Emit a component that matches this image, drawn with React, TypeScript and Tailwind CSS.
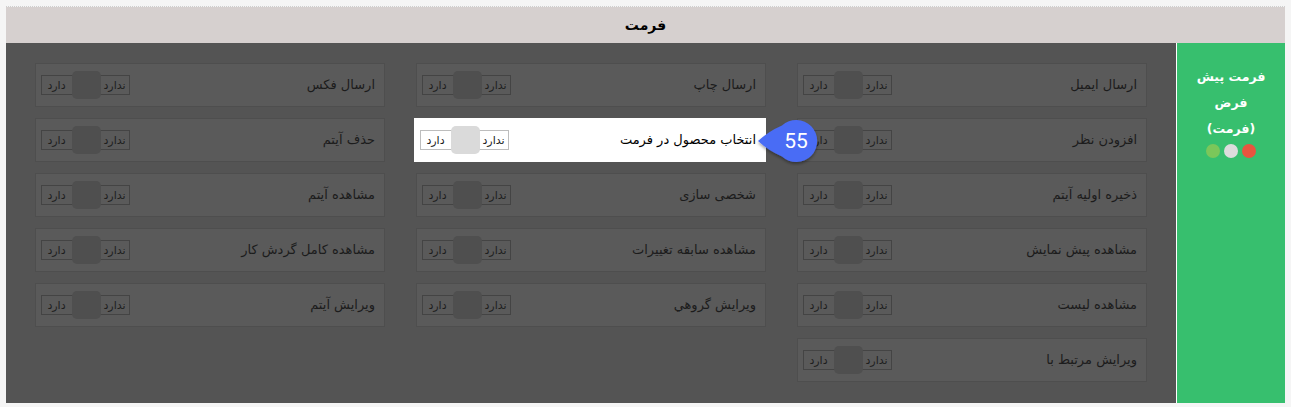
import React from "react"

type Item = { label: string; active?: boolean }

const items: Item[] = [
  { label: "ارسال ایمیل" },
  { label: "ارسال چاپ" },
  { label: "ارسال فکس" },
  { label: "افزودن نظر" },
  { label: "انتخاب محصول در فرمت", active: true },
  { label: "حذف آیتم" },
  { label: "ذخیره اولیه آیتم" },
  { label: "شخصی سازی" },
  { label: "مشاهده آیتم" },
  { label: "مشاهده پیش نمایش" },
  { label: "مشاهده سابقه تغییرات" },
  { label: "مشاهده کامل گردش کار" },
  { label: "مشاهده لیست" },
  { label: "ویرایش گروهي" },
  { label: "ویرایش آیتم" },
  { label: "ویرایش مرتبط با" },
]

function Toggle({ active }: { active?: boolean }) {
  return (
    <div className="relative flex h-[28px] items-center">
      <div
        className={
          "flex h-[20px] w-[89px] items-center border text-[11px] leading-none " +
          (active ? "border-[#bdbdbd] text-[#222]" : "border-[#444] text-[#1e1e1e]")
        }
      >
        <span className="w-[29px] text-center">ندارد</span>
        <span className="w-[29px]" />
        <span className="flex-1 text-center">دارد</span>
      </div>
      <div
        className={
          "absolute right-[29px] top-0 h-[28px] w-[29px] rounded-[5px] " +
          (active ? "bg-[#dadada]" : "bg-[#4f4f4f]")
        }
      />
    </div>
  )
}

function Card({ item }: { item: Item }) {
  return (
    <div
      className={
        "flex h-[44px] items-center justify-between border pr-[9px] pl-[5px] " +
        (item.active ? "relative z-10 -ml-[2px] border-white bg-white" : "border-[#4e4e4e] bg-[#5a5a5a]")
      }
    >
      <span className={"text-[13px] " + (item.active ? "text-black" : "text-[#1c1c1c]")}>
        {item.label}
      </span>
      <Toggle active={item.active} />
    </div>
  )
}

export default function App() {
  return (
    <div
      dir="rtl"
      className="h-[407px] w-[1291px] bg-[#f5f5f5] px-[6px] pt-[6px] font-['DejaVu_Sans',sans-serif]"
    >
      <div className="border-t border-dotted border-[#cfcfcf]">
        <div className="flex h-[36px] items-center justify-center bg-[#d6d0cf] text-[14px] font-bold text-black">
          فرمت
        </div>
        <div className="flex h-[360px]">
          <div className="flex w-[109px] flex-col items-center border-l border-white bg-[#37bf6e] pt-[21px] text-[12.5px] font-bold leading-[26px] text-white">
            <span>فرمت پیش</span>
            <span>فرض</span>
            <span>(فرمت)</span>
            <div className="mt-[2px] flex gap-[4px]">
              <span className="h-[14px] w-[14px] rounded-full bg-[#e8553f]" />
              <span className="h-[14px] w-[14px] rounded-full bg-[#dcdcdc]" />
              <span className="h-[14px] w-[14px] rounded-full bg-[#7bc75a]" />
            </div>
          </div>
          <div className="relative flex-1 bg-[#545454] pr-[29px] pt-[20px]">
            <div className="grid grid-cols-[350px_350px_350px] gap-x-[31px] gap-y-[11px]">
              {items.map((item) => (
                <Card key={item.label} item={item} />
              ))}
            </div>
            <svg
              className="absolute left-[748px] top-[75px] z-20"
              width="66"
              height="48"
              viewBox="0 0 66 48"
            >
              <defs>
                <filter id="sh" x="-20%" y="-20%" width="140%" height="150%">
                  <feDropShadow dx="0" dy="2" stdDeviation="1.5" floodColor="#000" floodOpacity="0.35" />
                </filter>
              </defs>
              <path
                d="M4 23 Q15 13 28 7.5 A21 21 0 1 1 28 38.5 Q15 33 4 23 Z"
                fill="#4a6cf5"
                filter="url(#sh)"
              />
              <text
                x="42"
                y="30"
                textAnchor="middle"
                fill="#fff"
                fontSize="21"
                fontFamily="Roboto, sans-serif"
              >
                55
              </text>
            </svg>
          </div>
        </div>
      </div>
    </div>
  )
}
